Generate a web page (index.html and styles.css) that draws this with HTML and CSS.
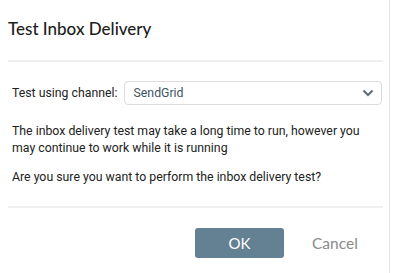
FILE: index.html
```html
<!DOCTYPE html>
<html lang="en">
<head>
    <meta charset="UTF-8">
    <title>Test Inbox Delivery</title>
    <link rel="stylesheet" href="styles.css">
</head>
<body>
    <div class="dialog">
        <h1 class="dialog-title">Test Inbox Delivery</h1>

        <div class="dialog-body">
            <div class="channel-row">
                <label for="channel">Test using channel:</label>
                <div class="select-box">
                    <span id="channel">SendGrid</span>
                    <svg class="chevron" width="12" height="8" viewBox="0 0 12 8">
                        <path d="M1.5 1.5 L6 6 L10.5 1.5" fill="none" stroke="#5f6f7b" stroke-width="2.2"/>
                    </svg>
                </div>
            </div>
            <p>The inbox delivery test may take a long time to run, however you may continue to work while it is running</p>
            <p>Are you sure you want to perform the inbox delivery test?</p>
        </div>

        <div class="dialog-footer">
            <button class="btn-ok">OK</button>
            <button class="btn-cancel">Cancel</button>
        </div>
    </div>
</body>
</html>
```

FILE: styles.css
```css
* {
    box-sizing: border-box;
}

body {
    margin: 0;
    background: #fff;
    font-family: Roboto, "Liberation Sans", sans-serif;
    color: #222;
}

.dialog {
    width: 390px;
    height: 273px;
    border-right: 1px solid #e6e6e6;
    padding: 0 6px 0 8px;
}

.dialog-title {
    margin: 0;
    padding: 18px 0 0 0;
    height: 62px;
    font-family: Lato, sans-serif;
    font-size: 17px;
    font-weight: 500;
    color: #1d1d1d;
    border-bottom: 2px solid #efefef;
}

.dialog-body {
    padding: 19px 1px 0 4px;
    height: 146px;
    border-bottom: 2px solid #efefef;
    font-size: 12.3px;
}

.channel-row {
    display: flex;
    align-items: center;
    gap: 6px;
}

.select-box {
    flex: 1;
    height: 24px;
    display: flex;
    align-items: center;
    justify-content: space-between;
    padding: 0 7px 0 9px;
    border: 1px solid #dcdcdc;
    border-radius: 4px;
    color: #3e5566;
}

.dialog-body p {
    margin: 18px 0 0 0;
    line-height: 17px;
}

.dialog-body p + p {
    margin-top: 12px;
}

.dialog-footer {
    display: flex;
    align-items: center;
    padding: 20px 0 0 187px;
}

.btn-ok {
    width: 89px;
    height: 30px;
    border: 0;
    border-radius: 3px;
    background: #648093;
    color: #fff;
    font-family: Lato, sans-serif;
    font-size: 15px;
}

.btn-cancel {
    margin-left: 22px;
    border: 0;
    background: none;
    color: #8a8a8a;
    font-family: Lato, sans-serif;
    font-size: 15.5px;
}
```
